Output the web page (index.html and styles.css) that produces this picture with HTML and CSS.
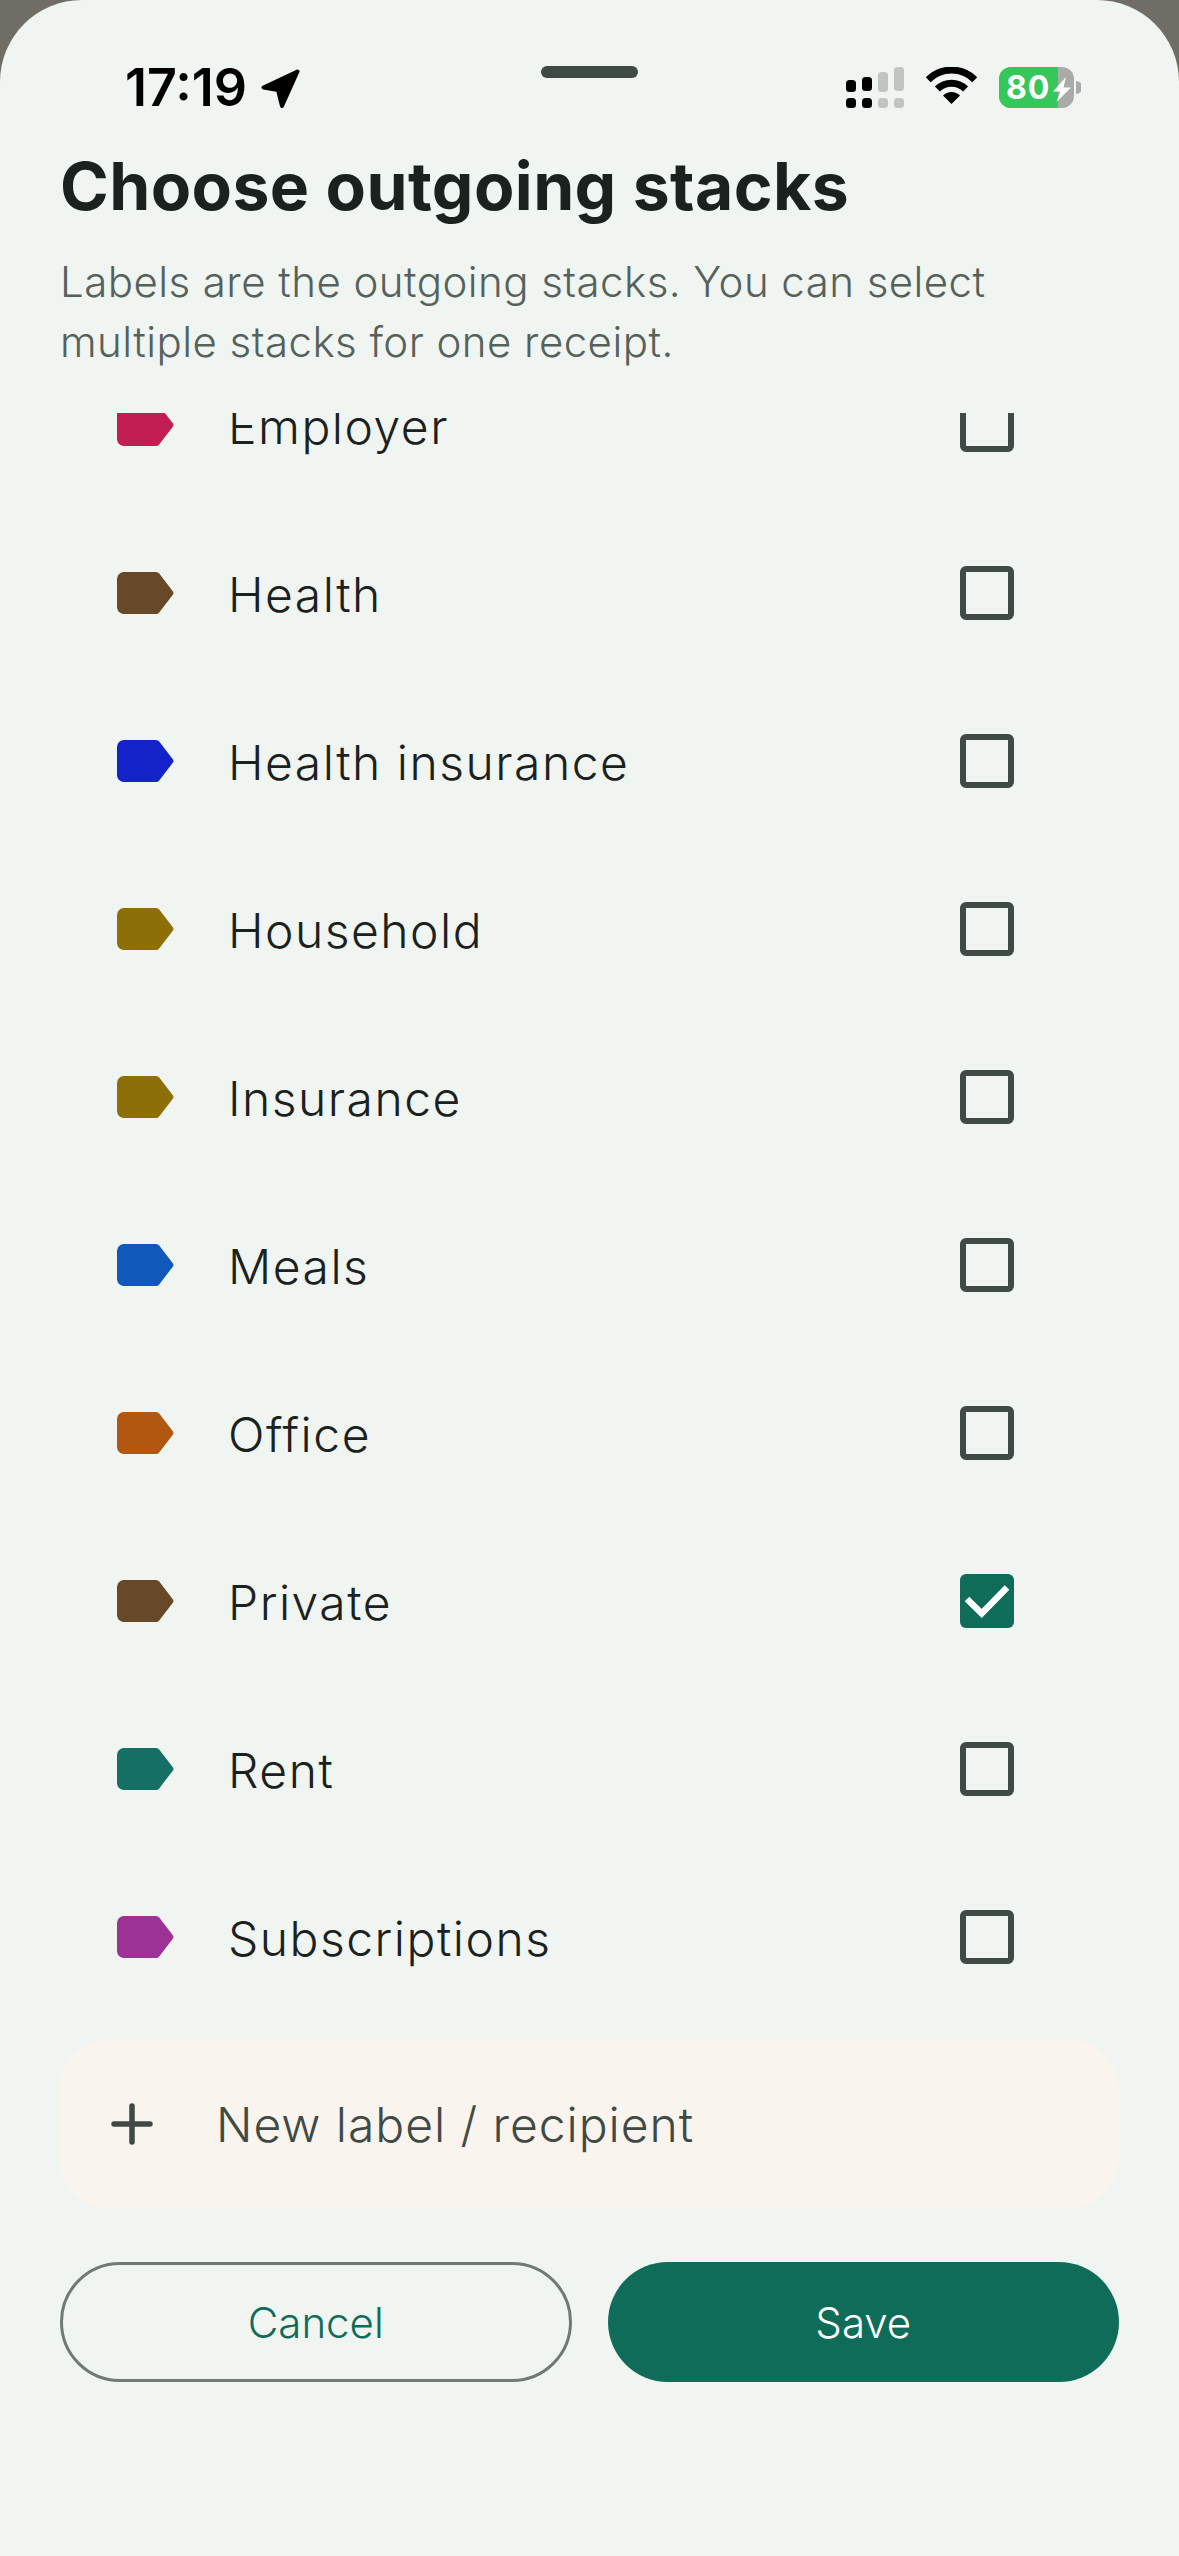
FILE: index.html
```html
<!DOCTYPE html>
<html lang="en">
<head>
  <meta charset="UTF-8">
  <title>Choose outgoing stacks</title>
  <link rel="stylesheet" href="styles.css">
</head>
<body>
  <svg class="defs" width="0" height="0">
    <symbol id="tag" viewBox="0 0 57 42">
      <path d="M7 0H39a4 4 0 0 1 3.2 1.6L56 19.6a2.5 2.5 0 0 1 0 2.8L42.2 40.4a4 4 0 0 1-3.2 1.6H7a7 7 0 0 1-7-7V7a7 7 0 0 1 7-7Z" fill="currentColor"/>
    </symbol>
  </svg>

  <div class="sheet">
    <div class="status">
      <div class="status-left">
        <span class="time">17:19</span>
        <svg class="arrow" width="39" height="39" viewBox="0 0 39 39">
          <path d="M36.5 2.5 2.5 18.5 17 21 21 37Z" fill="#000" stroke="#000" stroke-width="4" stroke-linejoin="round"/>
        </svg>
      </div>
      <div class="handle"></div>
      <div class="status-right">
        <svg width="58" height="41" viewBox="0 0 58 41">
          <rect x="0" y="13" width="10" height="12" rx="3.5"/>
          <rect x="16" y="10" width="10" height="14" rx="3.5"/>
          <rect x="0" y="31" width="10" height="10" rx="3.5"/>
          <rect x="16" y="31" width="10" height="10" rx="3.5"/>
          <g fill="#c0c5c1">
            <rect x="32" y="5" width="10" height="20" rx="3.5"/>
            <rect x="48" y="0" width="10" height="24" rx="3.5"/>
            <rect x="32" y="31" width="10" height="10" rx="3.5"/>
            <rect x="48" y="31" width="10" height="10" rx="3.5"/>
          </g>
        </svg>
        <svg width="51" height="37" viewBox="0 0 51 37">
          <path d="M2.2 12.7a33 33 0 0 1 46.6 0M11.4 22a20 20 0 0 1 28.2 0" fill="none" stroke="#000" stroke-width="7"/>
          <path d="M25.5 37 17 28.5a12 12 0 0 1 17 0Z"/>
        </svg>
        <svg width="82" height="41" viewBox="0 0 82 41">
          <rect width="75" height="41" rx="12" fill="#a9aaa9"/>
          <path d="M12 0H59V41H12A12 12 0 0 1 0 29V12A12 12 0 0 1 12 0Z" fill="#34c85a"/>
          <path d="M77 14a6 6 0 0 1 0 13Z" fill="#a9aaa9"/>
          <text class="battery-text" x="7" y="31.5">80</text>
          <path d="M67 10 54 24.5H61.5L57.5 35 72 20.5H64.5Z" fill="#fff"/>
        </svg>
      </div>
    </div>

    <div class="header">
      <h1>Choose outgoing stacks</h1>
      <p>Labels are the outgoing stacks. You can select multiple stacks for one receipt.</p>
    </div>

    <div class="list">
      <div class="row row-first">
        <svg class="tag tag-red"><use href="#tag"/></svg>
        <span class="row-name">Employer</span>
        <span class="box"></span>
      </div>
      <div class="row">
        <svg class="tag tag-brown"><use href="#tag"/></svg>
        <span class="row-name">Health</span>
        <span class="box"></span>
      </div>
      <div class="row">
        <svg class="tag tag-blue"><use href="#tag"/></svg>
        <span class="row-name">Health insurance</span>
        <span class="box"></span>
      </div>
      <div class="row">
        <svg class="tag tag-olive"><use href="#tag"/></svg>
        <span class="row-name">Household</span>
        <span class="box"></span>
      </div>
      <div class="row">
        <svg class="tag tag-olive"><use href="#tag"/></svg>
        <span class="row-name">Insurance</span>
        <span class="box"></span>
      </div>
      <div class="row">
        <svg class="tag tag-sky"><use href="#tag"/></svg>
        <span class="row-name">Meals</span>
        <span class="box"></span>
      </div>
      <div class="row">
        <svg class="tag tag-orange"><use href="#tag"/></svg>
        <span class="row-name">Office</span>
        <span class="box"></span>
      </div>
      <div class="row">
        <svg class="tag tag-brown"><use href="#tag"/></svg>
        <span class="row-name">Private</span>
        <span class="box box-on">
          <svg width="54" height="54" viewBox="0 0 54 54">
            <path d="M7 25 21.7 39.5 47 13.5" fill="none" stroke="#fff" stroke-width="6.5"/>
          </svg>
        </span>
      </div>
      <div class="row">
        <svg class="tag tag-teal"><use href="#tag"/></svg>
        <span class="row-name">Rent</span>
        <span class="box"></span>
      </div>
      <div class="row">
        <svg class="tag tag-purple"><use href="#tag"/></svg>
        <span class="row-name">Subscriptions</span>
        <span class="box"></span>
      </div>
    </div>

    <div class="footer">
      <div class="new-label">
        <svg width="42" height="42" viewBox="0 0 42 42">
          <path d="M21 3V39M3 21H39" fill="none" stroke="#3f4945" stroke-width="5.5" stroke-linecap="round"/>
        </svg>
        <span>New label / recipient</span>
      </div>
      <div class="buttons">
        <button class="btn btn-cancel">Cancel</button>
        <button class="btn btn-save">Save</button>
      </div>
    </div>
  </div>
</body>
</html>
```

FILE: styles.css
```css
html, body {
  margin: 0;
  padding: 0;
}
body {
  background: #706c66;
  font-family: "Inter", "Noto Sans", sans-serif;
  color: #1a211e;
}
.defs {
  display: block;
  height: 0;
}
.sheet {
  height: 2556px;
  box-sizing: border-box;
  background: #f0f5f1;
  border-radius: 82px 82px 0 0;
  overflow: hidden;
}

/* status bar */
.status {
  display: grid;
  grid-template-columns: 1fr auto 1fr;
  height: 146px;
  padding-top: 66px;
  box-sizing: border-box;
}
.status-left {
  display: flex;
  align-items: flex-start;
  gap: 14px;
  padding-left: 125px;
}
.time {
  margin-top: -3px;
  font-size: 52px;
  font-weight: 600;
  line-height: 50px;
  color: #000;
}
.arrow {
  margin-top: 3px;
}
.handle {
  width: 97px;
  height: 12px;
  border-radius: 6px;
  background: #3f4a45;
}
.status-right {
  display: flex;
  justify-content: flex-end;
  align-items: flex-start;
  gap: 22px;
  padding-right: 98px;
  padding-top: 1px;
}
.battery-text {
  font-size: 32px;
  font-weight: 700;
  letter-spacing: 1px;
  fill: #fff;
}

/* title */
.header {
  padding: 0 60px;
}
.header h1 {
  margin: 0;
  font-size: 66px;
  font-weight: 700;
  line-height: 80px;
  letter-spacing: 0.4px;
  color: #1a211e;
}
.header p {
  margin: 26px 0 0;
  font-size: 42px;
  font-weight: 300;
  line-height: 60px;
  letter-spacing: 0.45px;
  color: #55625c;
}

/* list */
.list {
  height: 1609px;
  margin-top: 41px;
  overflow: hidden;
}
.row {
  display: flex;
  align-items: center;
  height: 168px;
  padding: 0 165px 0 117px;
}
.row-first {
  margin-top: -72px;
}
.tag {
  width: 57px;
  height: 42px;
  flex: none;
}
.tag-red { color: #c31e53; }
.tag-brown { color: #67492a; }
.tag-blue { color: #1423c9; }
.tag-olive { color: #8e6f07; }
.tag-sky { color: #1059b8; }
.tag-orange { color: #b2570f; }
.tag-teal { color: #156f65; }
.tag-purple { color: #9c3296; }
.row-name {
  flex: 1;
  margin-left: 54px;
  padding-top: 2px;
  font-size: 48px;
  font-weight: 300;
  letter-spacing: 1.5px;
}
.box {
  width: 54px;
  height: 54px;
  flex: none;
  box-sizing: border-box;
  border: 6px solid #3f4945;
  border-radius: 6px;
}
.box-on {
  border: none;
  background: #0f6c58;
}
.box-on svg {
  display: block;
}

/* bottom actions */
.footer {
  padding: 18px 60px 0;
}
.new-label {
  display: flex;
  align-items: center;
  gap: 63px;
  height: 168px;
  padding-left: 51px;
  border-radius: 50px;
  background: #f9f4ed;
  font-size: 48px;
  font-weight: 300;
  letter-spacing: 0.95px;
  color: #3f4945;
}
.buttons {
  display: grid;
  grid-template-columns: 1fr 1fr;
  gap: 36px;
  margin-top: 54px;
}
.btn {
  height: 120px;
  padding: 0;
  border-radius: 60px;
  font-family: inherit;
  font-size: 42px;
  font-weight: 300;
}
.btn-cancel {
  border: 3px solid #6f7a75;
  background: transparent;
  color: #0f6c58;
}
.btn-save {
  border: none;
  background: #0f6c58;
  color: #fff;
}
```
